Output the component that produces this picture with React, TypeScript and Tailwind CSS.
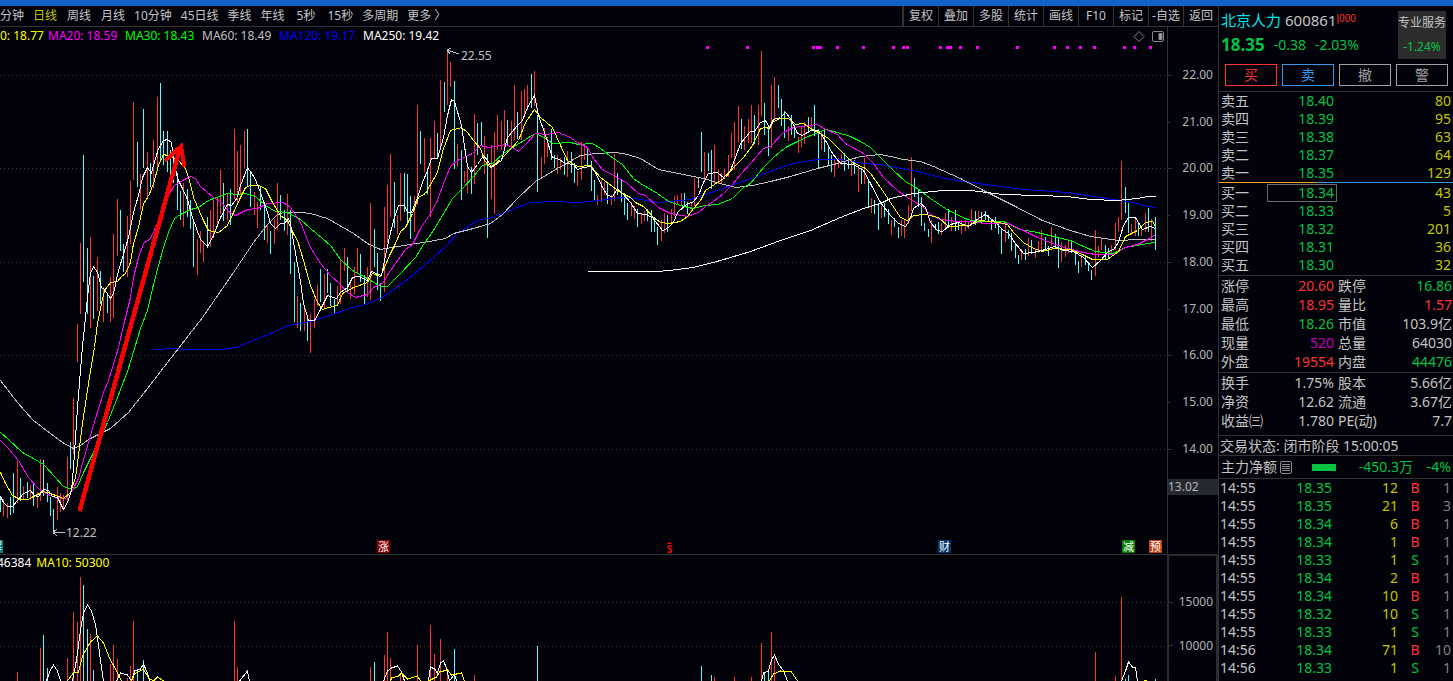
import React from 'react';

const PRICE_TOP = 27;
const PRICE_H = 527;
const VOL_TOP = 555;
const VOL_H = 126;
const PLOT_W = 1167;

/* Bars are written as "x:top-bottom". */
const RED_BARS = `3:499-516 7:503-518 17:461-503 23:486-500 30:485-500 37:492-508 40:459-501 57:487-520 60:493-512 63:495-508 67:457-502 73:398-454
77:324-362 80:243-314 90:237-328 97:257-311 103:287-322 110:277-322 113:234-318 117:199-256 127:216-277 130:181-244 133:102-180 140:174-210 147:152-197 153:140-188 157:97-171
183:183-227 197:239-275 200:231-253 203:241-262 210:210-247 213:200-238 217:198-224 220:170-214 227:194-220 234:129-199 237:151-205 240:145-194 244:131-168 254:192-215 257:202-228
267:225-243 274:219-244 277:183-230 287:194-235 297:296-328 304:307-331 310:314-353 314:299-328 317:285-306 324:274-308 337:286-305 340:260-304 344:248-271 350:280-299 354:267-294
357:248-273 367:267-297 370:203-300 384:207-292 387:185-243 390:154-217 397:215-234 400:173-221 414:196-232 417:105-205 424:138-172 430:138-217 434:121-158 440:80-146 447:50-105
450:62-87 457:144-167 464:171-183 467:167-193 474:114-184 484:136-174 491:145-199 494:132-214 497:115-150 501:121-150 504:110-151 511:121-149 514:85-140 521:91-140 524:89-117
527:85-110 534:71-106 541:157-179 544:128-164 547:137-157 557:155-174 560:158-170 567:151-177 577:171-186 581:142-180 584:146-160 597:195-205 601:180-202 604:182-195 611:195-205
614:154-201 631:202-216 634:206-219 641:213-224 644:211-221 661:220-241 664:213-233 671:209-224 674:196-216 677:195-205 681:193-205 691:202-209 694:178-206 704:152-180 714:145-184
718:169-184 721:173-184 724:169-179 728:155-177 731:133-158 734:122-170 738:106-142 744:126-150 748:119-143 751:105-143 758:105-145 761:51-116 771:85-148 774:77-119 788:126-141
798:137-153 801:126-147 804:122-144 811:117-130 821:131-150 834:160-177 838:158-168 841:154-165 851:160-176 858:166-192 864:158-184 871:198-213 881:206-218 891:220-235 901:220-236
904:220-238 908:205-224 911:157-211 931:220-243 941:223-235 945:213-229 951:217-231 961:220-234 965:220-231 968:222-229 971:209-224 978:211-221 1005:223-242 1021:249-260
1028:238-256 1035:249-258 1038:241-253 1041:230-251 1051:227-246 1061:242-262 1065:245-257 1068:240-253 1081:255-267 1095:230-276 1098:246-257 1101:238-250 1111:245-255
1115:223-250 1118:217-231 1121:161-220 1131:224-235 1135:218-236 1141:229-236 1145:213-232 1151:219-241`;

const CYAN_BARS = `0:498-512 10:497-515 13:473-513 20:478-501 27:482-498 33:484-506 43:460-496 47:483-502 50:497-516 53:509-533 70:442-469 83:155-282 87:248-314 93:276-319 100:271-304
107:293-313 120:210-251 123:244-272 137:142-187 143:109-168 150:163-187 160:83-160 163:131-165 167:131-172 170:150-174 173:160-183 177:173-210 180:191-220 187:189-217 190:200-229
193:220-267 207:217-248 223:183-221 230:189-225 247:129-186 250:173-207 260:187-210 264:205-240 270:231-254 280:195-220 284:210-231 290:210-274 294:262-322 300:303-331 307:317-341
320:269-302 327:269-293 330:283-306 334:299-313 347:257-293 360:254-282 364:275-304 374:229-267 377:253-290 380:283-301 394:182-228 404:173-212 407:174-222 410:196-239 420:131-164
427:168-194 437:133-158 444:82-112 454:81-169 461:150-200 471:167-194 477:123-155 481:122-146 487:154-238 507:120-145 517:112-139 531:74-108 537:115-192 551:129-160 554:155-168
564:157-175 571:152-173 574:163-183 587:147-165 591:161-191 594:180-200 607:183-204 617:173-195 621:180-202 624:193-215 627:203-220 637:209-227 647:209-221 651:210-232 654:217-232
657:227-245 667:215-232 684:193-206 687:202-214 701:132-172 708:153-171 711:150-189 741:119-149 754:115-144 764:103-135 768:125-156 778:85-108 781:99-126 784:111-138 791:115-135
794:125-138 808:117-133 814:105-136 818:129-168 824:128-152 828:146-165 831:155-172 844:153-171 848:158-169 854:160-174 861:168-184 868:180-207 874:200-214 878:203-230 884:203-217
888:209-224 894:218-227 898:227-238 914:178-197 918:190-207 921:197-226 924:223-231 928:229-237 935:224-230 938:222-234 948:209-228 955:210-231 958:221-230 975:211-225 981:212-223
985:211-220 988:215-222 991:220-230 995:217-228 998:223-234 1001:229-254 1008:230-239 1011:233-251 1015:243-258 1018:255-264 1025:249-260 1031:240-254 1045:237-250 1048:246-256
1055:234-249 1058:237-268 1071:241-253 1075:250-265 1078:261-273 1085:255-265 1088:262-271 1091:270-280 1105:245-259 1108:248-258 1125:187-213 1128:203-233 1138:223-236
1148:208-232 1155:217-250`;

const MA_LINES: { color: string; points: string }[] = [
  {
    color: '#0000ff',
    points:
      '153,349 172,348 185,349 220,349 236,347 250,341 270,333 287,325 300,323 314,320 323,317 352,307 365,304 382,297 403,282 423,266 445,246 457,233 477,220 492,217 507,211 530,202 553,201 577,202 590,201 620,197 635,198 658,202 690,199 705,194 733,184 757,176 780,167 793,163 817,159 840,159 863,163 880,164 890,166 917,171 940,177 963,181 993,185 1023,189 1067,192 1093,196 1113,199 1133,202 1147,206 1155,207',
  },
  {
    color: '#c0c0c0',
    points:
      '0,380 17,402 33,420 50,433 62,442 73,448 80,445 88,439 100,433 110,428 128,412 147,388 167,362 178,348 202,317 233,272 253,242 267,224 277,214 283,212 300,212 310,213 327,218 353,233 367,243 380,249 403,245 423,242 445,238 453,233 473,228 490,223 502,214 517,198 535,181 557,168 580,155 595,153 615,152 627,154 640,158 658,169 683,174 703,178 720,183 735,187 752,185 770,181 790,176 817,168 837,163 860,156 880,154 890,156 903,159 920,161 933,166 960,178 985,191 1013,205 1042,220 1070,230 1090,236 1118,240 1137,239 1155,239',
  },
  {
    color: '#00ff00',
    points:
      '0,432 8,439 22,452 33,458 43,464 55,477 63,486 72,489 77,486 83,472 90,458 97,444 107,422 117,397 127,371 134,348 140,328 147,310 152,288 158,265 163,247 168,232 174,218 180,214 190,209 198,207 208,200 227,193 237,194 245,193 255,196 265,205 275,211 287,212 300,219 310,228 322,238 330,245 340,259 352,270 367,278 380,286 387,286 400,273 415,257 423,244 433,230 442,215 452,198 462,188 473,176 482,165 492,163 503,153 517,144 525,139 535,133 542,136 552,143 570,142 578,144 592,143 600,148 613,158 622,164 633,178 640,183 657,193 668,201 680,205 692,208 705,205 717,204 732,198 743,187 750,183 763,167 773,157 785,147 797,141 810,135 825,129 837,132 850,136 860,141 870,147 882,159 893,170 905,181 917,188 930,198 948,210 967,219 977,221 1003,221 1020,229 1037,232 1053,236 1070,240 1083,246 1095,251 1113,253 1125,247 1147,243 1155,242',
  },
  {
    color: '#ff00ff',
    points:
      '0,440 8,448 18,460 28,477 37,487 43,492 55,497 65,498 73,488 78,478 82,463 88,442 95,418 103,392 108,380 115,357 118,347 123,325 130,297 133,277 138,257 143,243 150,238 155,227 163,207 168,195 174,185 182,180 190,176 195,178 200,186 213,197 222,203 228,211 235,215 247,209 257,208 267,203 283,202 290,207 300,222 310,247 320,263 330,275 340,284 347,292 355,297 367,294 373,287 382,283 390,270 405,249 412,244 420,228 430,213 437,200 443,183 450,166 457,160 472,153 480,145 488,147 505,144 512,147 518,151 525,144 535,133 547,134 558,132 568,136 577,142 587,147 593,158 602,169 617,177 627,183 638,193 645,195 658,207 670,213 687,216 698,212 705,206 713,201 723,193 732,184 740,174 750,163 763,148 770,146 783,132 793,127 817,124 825,129 837,134 845,143 863,153 873,163 883,177 897,190 910,199 922,206 930,214 940,219 957,221 973,221 983,223 1008,223 1023,230 1037,237 1052,243 1067,248 1083,252 1095,254 1113,254 1125,247 1137,244 1147,239 1155,234',
  },
  {
    color: '#ffff00',
    points:
      '0,472 5,483 12,495 20,499 28,499 33,496 43,491 50,493 63,498 70,492 75,477 77,463 82,423 88,383 94,347 97,323 101,303 104,290 110,282 117,281 121,276 125,273 130,262 133,243 138,227 143,203 148,196 153,183 158,165 163,154 171,156 178,160 185,168 189,180 193,197 202,218 208,230 218,232 227,225 233,212 240,197 245,187 250,185 258,185 265,188 272,202 280,215 287,220 293,233 297,240 303,260 310,285 317,302 322,309 328,307 337,305 342,293 353,287 367,282 372,273 380,276 390,253 395,243 400,231 405,227 412,213 418,197 425,193 437,172 443,148 450,130 461,127 467,132 473,140 480,148 484,160 490,167 500,159 510,149 518,140 525,122 534,109 540,117 552,127 560,145 567,160 577,166 590,165 600,177 608,183 620,192 630,197 635,202 643,206 653,217 660,222 668,223 680,221 687,216 693,208 700,200 705,190 717,182 725,177 733,167 743,157 752,145 760,128 765,127 769,128 773,121 780,118 788,118 795,124 803,123 810,128 820,133 828,138 840,150 852,162 865,168 870,173 880,187 890,202 900,217 907,220 913,215 925,214 938,217 948,226 968,225 980,220 998,222 1007,224 1013,232 1023,242 1033,248 1042,251 1053,248 1070,249 1082,254 1092,259 1107,259 1118,251 1125,236 1137,230 1145,222 1152,221 1155,226',
  },
  {
    color: '#ffffff',
    points:
      '0,496 3,502 7,506 12,506 17,500 23,493 30,490 34,495 38,496 43,489 48,490 52,496 57,497 63,509 67,502 71,490 73,467 77,407 82,345 84,327 87,297 90,273 93,266 97,272 101,287 104,289 110,298 113,293 118,270 123,254 128,237 133,212 138,195 142,177 147,167 151,173 153,165 158,148 163,140 167,139 171,142 173,158 177,178 182,188 187,199 192,217 200,239 207,246 213,235 220,217 227,204 231,205 237,197 240,185 247,167 254,177 260,192 267,212 270,223 275,228 280,223 284,223 288,218 290,223 294,247 300,281 303,303 308,320 314,320 320,309 327,295 336,298 340,292 347,287 352,277 358,276 367,280 371,271 381,275 384,260 390,232 394,217 398,205 404,205 407,212 411,212 417,197 422,182 427,170 431,158 437,158 443,137 447,115 451,99 454,101 461,125 467,166 471,172 477,164 483,155 487,160 491,167 501,160 507,137 517,125 522,120 527,107 534,95 538,115 545,135 552,157 557,158 565,163 573,164 577,169 583,167 590,166 595,172 602,187 607,195 612,196 617,188 623,194 630,202 637,213 645,214 652,217 662,230 667,228 673,222 677,212 687,203 692,202 698,195 703,182 708,173 717,172 723,177 730,170 735,157 740,143 750,131 754,131 760,122 765,120 769,127 773,119 780,117 785,112 790,118 797,133 802,135 810,130 818,130 825,140 832,153 840,163 853,164 863,170 870,183 880,202 890,215 898,223 905,226 909,220 913,208 920,203 925,207 930,222 937,230 942,231 950,224 958,222 968,226 978,218 985,214 995,222 1002,229 1008,233 1015,243 1023,253 1033,252 1045,249 1054,246 1063,250 1073,251 1083,257 1092,267 1100,260 1108,251 1113,249 1118,242 1123,225 1128,217 1135,217 1142,229 1150,226 1155,228',
  },
  {
    color: '#ffffff',
    points:
      '587,271 658,271 677,269 693,267 720,260 750,251 780,240 810,230 840,217 863,208 880,203 890,198 913,193 943,190 970,190 1003,194 1037,195 1067,196 1090,199 1117,200 1137,198 1147,196 1155,196',
  },
];

const VOL_RED =
  '17:672-681 40:648-681 67:658-681 73:612-681 77:622-681 80:577-681 90:634-681 110:664-681 113:645-681 117:659-681 127:678-681 130:666-681 133:621-681 234:621-681 237:667-681 370:667-681 384:655-681 387:632-681 390:658-681 400:675-681 417:645-681 430:625-681 434:654-681 440:639-681 447:673-681 474:675-681 714:677-681 734:677-681 751:677-681 761:643-681 771:632-681 774:659-681 1095:652-681 1115:676-681 1121:597-681';
const VOL_CYAN =
  '43:635-681 47:668-681 83:585-681 87:629-681 93:670-681 137:670-681 143:660-681 374:662-681 454:649-681 537:646-681 701:666-681 711:675-681 764:672-681 768:672-681 1125:679-681 1128:675-681 1155:679-681';
const VOL_WHITE_MA = [
  '46,681 50,670 53,665 57,671 60,681',
  '72,681 76,660 80,630 83,613 87,605 91,611 95,625 98,645 101,668 103,681',
  '116,681 120,673 127,675 131,681 134,671 140,669 143,664 147,673 149,681',
  '239,681 247,671 249,681',
  '383,681 387,671 391,668 397,666 401,672 404,681',
  '428,681 430,667 434,669 437,673 440,663 443,661 446,668 449,681 454,674 456,681',
  '761,681 763,673 768,671 771,660 774,655 778,664 783,671 787,681',
  '1121,681 1125,671 1128,662 1132,667 1135,667 1137,681',
];
const VOL_YELLOW_MA = [
  '67,681 73,673 78,672 82,656 90,642 97,636 103,643 109,658 116,671 121,681',
  '131,681 134,674 143,669 148,678 153,681 157,677 163,681',
  '390,681 391,678 398,676 401,673 407,679 417,676 420,681',
  '428,681 436,677 439,672 447,670 451,675 461,673 464,681',
  '769,681 773,674 780,671 791,672 797,681',
  '1143,680 1146,680',
];

const SIGNALS = [
  707, 747, 813, 817, 820, 837, 863, 893, 903, 907, 940, 947, 950, 960, 977, 1017, 1054, 1067, 1080, 1094, 1124, 1134, 1150,
];

const PRICE_LABELS: [string, number, boolean][] = [
  ['22.00', 75, true],
  ['21.00', 122, false],
  ['20.00', 168, true],
  ['19.00', 215, false],
  ['18.00', 262, true],
  ['17.00', 309, false],
  ['16.00', 355, true],
  ['15.00', 402, false],
  ['14.00', 449, true],
];

const toPath = (bars: string) =>
  bars
    .trim()
    .split(/\s+/)
    .map((b) => {
      const [x, range] = b.split(':');
      const [top, bottom] = range.split('-');
      return `M${x} ${top}V${bottom}`;
    })
    .join('');

const pct = (v: number, total: number) => `${(v / total) * 100}%`;

const G = 'text-[#04c343]';
const R = 'text-[#ff3232]';
const W = 'text-[#c4c4c4]';
const Y = 'text-[#c4c400]';
const P = 'text-[#c000c0]';

function Toolbar() {
  const periods = ['分钟', '日线', '周线', '月线', '10分钟', '45日线', '季线', '年线', '5秒', '15秒', '多周期', '更多 〉'];
  const tools = ['复权', '叠加', '多股', '统计', '画线', 'F10', '标记', '-自选', '返回'];
  return (
    <div className="flex h-[21px] shrink-0 justify-between border-b border-[#333333] text-xs leading-5 text-[#c4c4c4]">
      <nav className="flex gap-[9px] overflow-hidden whitespace-nowrap">
        {periods.map((p) => (
          <button
            key={p}
            className={p === '日线' ? 'pr-px text-[#c4c400]' : p === '周线' ? 'pr-px' : p === '5秒' ? 'px-[3px]' : ''}
          >
            {p}
          </button>
        ))}
      </nav>
      <div className="flex shrink-0 border-l border-[#333333]">
        {tools.map((t) => (
          <button key={t} className="w-[35px] border-l border-[#333333] text-center whitespace-nowrap">
            {t}
          </button>
        ))}
      </div>
    </div>
  );
}

function Grid({ rows }: { rows: number[] }) {
  return (
    <g stroke="#3a3a3a" strokeDasharray="1 3" shapeRendering="crispEdges">
      {rows.map((y) => (
        <line key={y} x1="0" x2={PLOT_W} y1={y + 0.5} y2={y + 0.5} />
      ))}
    </g>
  );
}

function PricePlot() {
  return (
    <svg
      className="absolute inset-0 h-full w-full"
      viewBox={`0 ${PRICE_TOP} ${PLOT_W} ${PRICE_H}`}
      preserveAspectRatio="none"
      fill="none"
      aria-hidden="true"
    >
      <Grid rows={[75, 168, 262, 355, 449]} />
      <g transform="translate(0.5 0)" shapeRendering="crispEdges">
        <path d={toPath(RED_BARS)} stroke="#ff3232" />
        <path d={toPath(CYAN_BARS)} stroke="#54fcfc" />
        <path d="M698 177V188" stroke="#c0c0c0" />
        {MA_LINES.map((l, i) => (
          <polyline key={i} points={l.points} stroke={l.color} transform="translate(0 0.5)" />
        ))}
      </g>
      <g fill="#ff00ff" shapeRendering="crispEdges">
        {SIGNALS.map((x) => (
          <rect key={x} x={x - 1} y="46" width="3" height="3" />
        ))}
      </g>
      <g stroke="#c0c0c0" shapeRendering="crispEdges">
        <path d="M53 532.5H65M53 532.5L57 529M53 532.5L57 536" />
        <path d="M447 50L459 54M447 50L451 48M447 50L450 54" />
      </g>
      <g stroke="#ff0000" shapeRendering="crispEdges">
        <path d="M79.500 511L180 148" strokeWidth="4.500" />
        <path d="M165 161L181 146L184.500 167" strokeWidth="4" />
      </g>
      <g stroke="#8a8a8a">
        <path d="M1139 31.500L1144 36.500L1139 41.500L1134 36.500Z" />
        <rect x="1152.500" y="31.500" width="11" height="10" rx="1.500" />
        <path d="M1159 33.500H1162V39.500H1159Z" fill="#a0a0a0" />
      </g>
    </svg>
  );
}

function Badge({ text, x, className }: { text: string; x: number; className: string }) {
  return (
    <span
      className={`absolute bottom-px h-[13px] w-[13px] text-center text-[11px] leading-[13px] text-white ${className}`}
      style={{ left: pct(x, PLOT_W) }}
    >
      {text}
    </span>
  );
}

function PricePane() {
  const legend: [string, string][] = [
    ['0: 18.77', 'w-12 text-[#ffff00]'],
    ['MA20: 18.59', 'w-[77px] text-[#ff00ff]'],
    ['MA30: 18.43', 'w-[77px] text-[#00ff00]'],
    ['MA60: 18.49', 'w-[77px] text-[#c0c0c0]'],
    ['MA120: 19.17', 'w-[84px] text-[#0000ff]'],
    ['MA250: 19.42', 'text-white'],
  ];
  return (
    <section className="flex min-h-0 flex-[527] basis-0">
      <div className="relative min-w-0 flex-1 overflow-hidden">
        <PricePlot />
        <div className="relative flex text-xs leading-[17px] whitespace-nowrap">
          {legend.map(([t, c]) => (
            <span key={t} className={c}>
              {t}
            </span>
          ))}
        </div>
        <span
          className="absolute -translate-y-1/2 text-xs text-[#c0c0c0]"
          style={{ left: pct(461, PLOT_W), top: pct(56 - PRICE_TOP, PRICE_H) }}
        >
          22.55
        </span>
        <span
          className="absolute -translate-y-1/2 text-xs text-[#c0c0c0]"
          style={{ left: pct(66, PLOT_W), top: pct(533 - PRICE_TOP, PRICE_H) }}
        >
          12.22
        </span>
        <Badge text="解" x={-10} className="bg-[#008080]" />
        <Badge text="涨" x={377} className="bg-[#800000]" />
        <Badge text="财" x={938} className="bg-[#003468]" />
        <Badge text="减" x={1122} className="bg-[#008000]" />
        <Badge text="预" x={1149} className="bg-[#c04010]" />
        <span
          className="absolute bottom-0 flex w-[7px] flex-col items-center text-[10px] leading-[10px] font-bold text-[#ff0000]"
          style={{ left: pct(666, PLOT_W) }}
        >
          <svg width="5" height="2" viewBox="0 0 5 2" fill="#ff0000" aria-hidden="true">
            <path d="M2.500 0L5 2H0Z" />
          </svg>
          S
        </span>
      </div>
      <div className="relative w-[51px] shrink-0 border-l border-[#333333] text-xs text-[#b4b4b4]">
        {PRICE_LABELS.map(([t, y, major]) => (
          <div
            key={t}
            className="absolute inset-x-0 flex -translate-y-1/2 items-center justify-between pr-[5px]"
            style={{ top: pct(y - PRICE_TOP, PRICE_H) }}
          >
            <i className={`h-px bg-[#333333] ${major ? 'w-1' : 'w-0.5'}`} />
            {t}
          </div>
        ))}
        <div
          className="absolute inset-x-0 h-4 bg-[#262931] leading-4"
          style={{ top: pct(479 - PRICE_TOP, PRICE_H) }}
        >
          13.02
        </div>
      </div>
    </section>
  );
}

function VolumePane() {
  return (
    <section className="flex min-h-0 flex-[127] basis-0">
      <div className="relative min-w-0 flex-1 overflow-hidden border-t border-[#333333]">
        <svg
          className="absolute inset-0 h-full w-full"
          viewBox={`0 ${VOL_TOP} ${PLOT_W} ${VOL_H}`}
          preserveAspectRatio="none"
          fill="none"
          aria-hidden="true"
        >
          <Grid rows={[602, 646]} />
          <g transform="translate(0.5 0)" shapeRendering="crispEdges">
            <path d={toPath(VOL_RED)} stroke="#ff3232" />
            <path d={toPath(VOL_CYAN)} stroke="#54fcfc" />
            {VOL_WHITE_MA.map((p) => (
              <polyline key={p} points={p} stroke="#ffffff" />
            ))}
            {VOL_YELLOW_MA.map((p) => (
              <polyline key={p} points={p} stroke="#ffff00" />
            ))}
          </g>
        </svg>
        <div className="relative -ml-[3px] flex gap-[5px] text-xs leading-4">
          <span className="text-white">46384</span>
          <span className="text-[#ffff00]">MA10: 50300</span>
        </div>
      </div>
      <div className="relative w-[51px] shrink-0 border-2 border-b-0 border-[#2c2c2c] text-xs text-[#b4b4b4]">
        {(
          [
            ['15000', 602],
            ['', 624],
            ['10000', 646],
            ['', 669],
          ] as [string, number][]
        ).map(([t, y]) => (
          <div
            key={y}
            className="absolute inset-x-0 flex -translate-y-1/2 items-center justify-between pr-[3px]"
            style={{ top: pct(y - VOL_TOP - 0.5, VOL_H) }}
          >
            <i className={`h-px bg-[#333333] ${t ? 'w-1' : 'w-px'}`} />
            {t}
          </div>
        ))}
      </div>
    </section>
  );
}

function QuoteHeader() {
  return (
    <header className="flex h-[86px] shrink-0 flex-col border-b border-[#333333]">
      <div className="flex justify-between pt-1 pr-[7px] pl-0.5">
        <div className="flex flex-col">
          <h1 className="flex text-[15px] leading-5 whitespace-nowrap">
            <span className="text-[#00e4e4]">北京人力</span>
            <span className="ml-1 text-[#c4c4c4]">600861</span>
            <span className="font-['Liberation_Sans_Narrow','Liberation_Sans',sans-serif] text-[10px] leading-[18px] text-[#ff3232]">
              |000
            </span>
          </h1>
          <p className="flex items-center gap-[9px] pt-[3px] text-sm leading-6 text-[#04c343]">
            <strong className="text-[17px]">18.35</strong>
            <span>-0.38</span>
            <span>-2.03%</span>
          </p>
        </div>
        <div className="mt-px flex h-12 w-12 flex-col bg-[#2c2c2c] text-center text-xs leading-6 whitespace-nowrap text-[#c4c4c4]">
          <span>专业服务</span>
          <span className="text-[#04c343]">-1.24%</span>
        </div>
      </div>
      <div className="grid grid-cols-4 gap-[5px] pt-[5px] pr-[5px] pl-[6px] text-sm leading-5">
        <button className="border border-[#ff3232] text-[#ff3232]">买</button>
        <button className="border border-[#3c96e8] text-[#3c96e8]">卖</button>
        <button className="border border-[#a0a0a0] text-[#a0a0a0]">撤</button>
        <button className="border border-[#a0a0a0] text-[#a0a0a0]">警</button>
      </div>
    </header>
  );
}

function Book({ rows, boxed, label }: { rows: string[][]; boxed?: boolean; label: string }) {
  return (
    <table className="w-full table-fixed" aria-label={label}>
      <colgroup>
        <col className="w-12" />
        <col className="w-[70px]" />
        <col />
      </colgroup>
      <tbody>
        {rows.map(([name, price, size], i) => (
          <tr key={name} className="h-[18px] leading-[18px]">
            <th className="p-0 pl-0.5 text-left font-normal">{name}</th>
            <td
              className={`p-0 pr-[3px] text-right ${G} ${
                boxed && i === 0 ? 'outline outline-1 -outline-offset-1 outline-[#6a6a6a]' : ''
              }`}
            >
              {price}
            </td>
            <td className={`p-0 pr-0.5 text-right ${Y}`}>{size}</td>
          </tr>
        ))}
      </tbody>
    </table>
  );
}

function Stats({ rows, label }: { rows: string[][]; label: string }) {
  return (
    <table className="w-full table-fixed" aria-label={label}>
      <colgroup>
        <col className="w-12" />
        <col className="w-[70px]" />
        <col className="w-12" />
        <col />
      </colgroup>
      <tbody>
        {rows.map(([a, av, ac, b, bv, bc]) => (
          <tr key={a} className="h-[19px] leading-[19px] whitespace-nowrap">
            <th className="p-0 pl-0.5 text-left font-normal">{a}</th>
            <td className={`p-0 pr-[3px] text-right ${ac}`}>{av}</td>
            <th className="p-0 pl-px text-left font-normal">{b}</th>
            <td className={`p-0 pr-px text-right ${bc}`}>{bv}</td>
          </tr>
        ))}
      </tbody>
    </table>
  );
}

function Ticks() {
  const rows = [
    ['14:55', '18.35', '12', 'B', '1'],
    ['14:55', '18.35', '21', 'B', '3'],
    ['14:55', '18.34', '6', 'B', '1'],
    ['14:55', '18.34', '1', 'B', '1'],
    ['14:55', '18.33', '1', 'S', '1'],
    ['14:55', '18.34', '2', 'B', '1'],
    ['14:55', '18.34', '10', 'B', '1'],
    ['14:55', '18.32', '10', 'S', '1'],
    ['14:55', '18.33', '1', 'S', '1'],
    ['14:56', '18.34', '71', 'B', '10'],
    ['14:56', '18.33', '1', 'S', '1'],
    ['14:56', '18.33', '16', 'S', '1'],
  ];
  return (
    <table className="w-full table-fixed" aria-label="分笔成交">
      <colgroup>
        <col className="w-12" />
        <col className="w-[68px]" />
        <col className="w-[66px]" />
        <col className="w-7" />
        <col />
      </colgroup>
      <tbody>
        {rows.map(([t, p, v, side, n], i) => (
          <tr key={i} className="h-[18px] leading-[18px]">
            <td className="p-0 pl-px">{t}</td>
            <td className={`p-0 pr-[3px] text-right ${G}`}>{p}</td>
            <td className={`p-0 pr-[3px] text-right ${Y}`}>{v}</td>
            <td className={`p-0 text-center ${side === 'B' ? R : G}`}>{side}</td>
            <td className="p-0 pr-0.5 text-right text-[#808080]">{n}</td>
          </tr>
        ))}
      </tbody>
    </table>
  );
}

function QuotePanel() {
  return (
    <aside className={`w-[235px] shrink-0 overflow-hidden border-l border-[#333333] text-sm ${W}`}>
      <QuoteHeader />
      <Book
        label="卖盘"
        rows={[
          ['卖五', '18.40', '80'],
          ['卖四', '18.39', '95'],
          ['卖三', '18.38', '63'],
          ['卖二', '18.37', '64'],
          ['卖一', '18.35', '129'],
        ]}
      />
      <div className="mb-px flex h-px">
        <div className="h-px w-[42%] bg-[#f0a030]" />
        <div className="h-px flex-1 bg-[#3c96e8]" />
      </div>
      <Book
        label="买盘"
        boxed
        rows={[
          ['买一', '18.34', '43'],
          ['买二', '18.33', '5'],
          ['买三', '18.32', '201'],
          ['买四', '18.31', '36'],
          ['买五', '18.30', '32'],
        ]}
      />
      <div className="mt-px border-t border-[#333333] pb-px">
        <Stats
          label="行情"
          rows={[
            ['涨停', '20.60', R, '跌停', '16.86', G],
            ['最高', '18.95', R, '量比', '1.57', R],
            ['最低', '18.26', G, '市值', '103.9亿', W],
            ['现量', '520', P, '总量', '64030', W],
            ['外盘', '19554', R, '内盘', '44476', G],
          ]}
        />
      </div>
      <div className="border-t border-[#333333] pb-[5px]">
        <Stats
          label="财务"
          rows={[
            ['换手', '1.75%', W, '股本', '5.66亿', W],
            ['净资', '12.62', W, '流通', '3.67亿', W],
            ['收益㈢', '1.780', W, 'PE(动)', '7.7', W],
          ]}
        />
      </div>
      <p className="border-t border-[#333333] pl-px leading-[19px] whitespace-nowrap">交易状态: 闭市阶段 15:00:05</p>
      <div className="flex items-center border-y border-[#333333] pr-0.5 pl-0.5 leading-[22px] whitespace-nowrap">
        <span>主力净额</span>
        <svg className="ml-[3px]" width="12" height="13" viewBox="0 0 12 13" fill="none" stroke="#8a8a8a" aria-hidden="true">
          <rect x="0.500" y="0.500" width="11" height="12" rx="1.500" />
          <path d="M2 3.500H10M2 5.500H10M2 7.500H10M2 9.500H10" />
        </svg>
        <i className="ml-5 h-[7px] w-6 bg-[#04c343]" />
        <span className={`flex-1 text-right ${G}`}>-450.3万</span>
        <span className={`w-[38px] text-right ${G}`}>-4%</span>
      </div>
      <Ticks />
    </aside>
  );
}

export default function App() {
  return (
    <div className="flex h-screen flex-col overflow-hidden bg-[#02020a] font-['Noto_Sans','Noto_Sans_CJK_SC',sans-serif]">
      <div className="h-1.5 shrink-0 bg-[#1062c6]" />
      <div className="flex min-h-0 flex-1">
        <main className="flex min-w-0 flex-1 flex-col">
          <Toolbar />
          <PricePane />
          <VolumePane />
        </main>
        <QuotePanel />
      </div>
    </div>
  );
}
